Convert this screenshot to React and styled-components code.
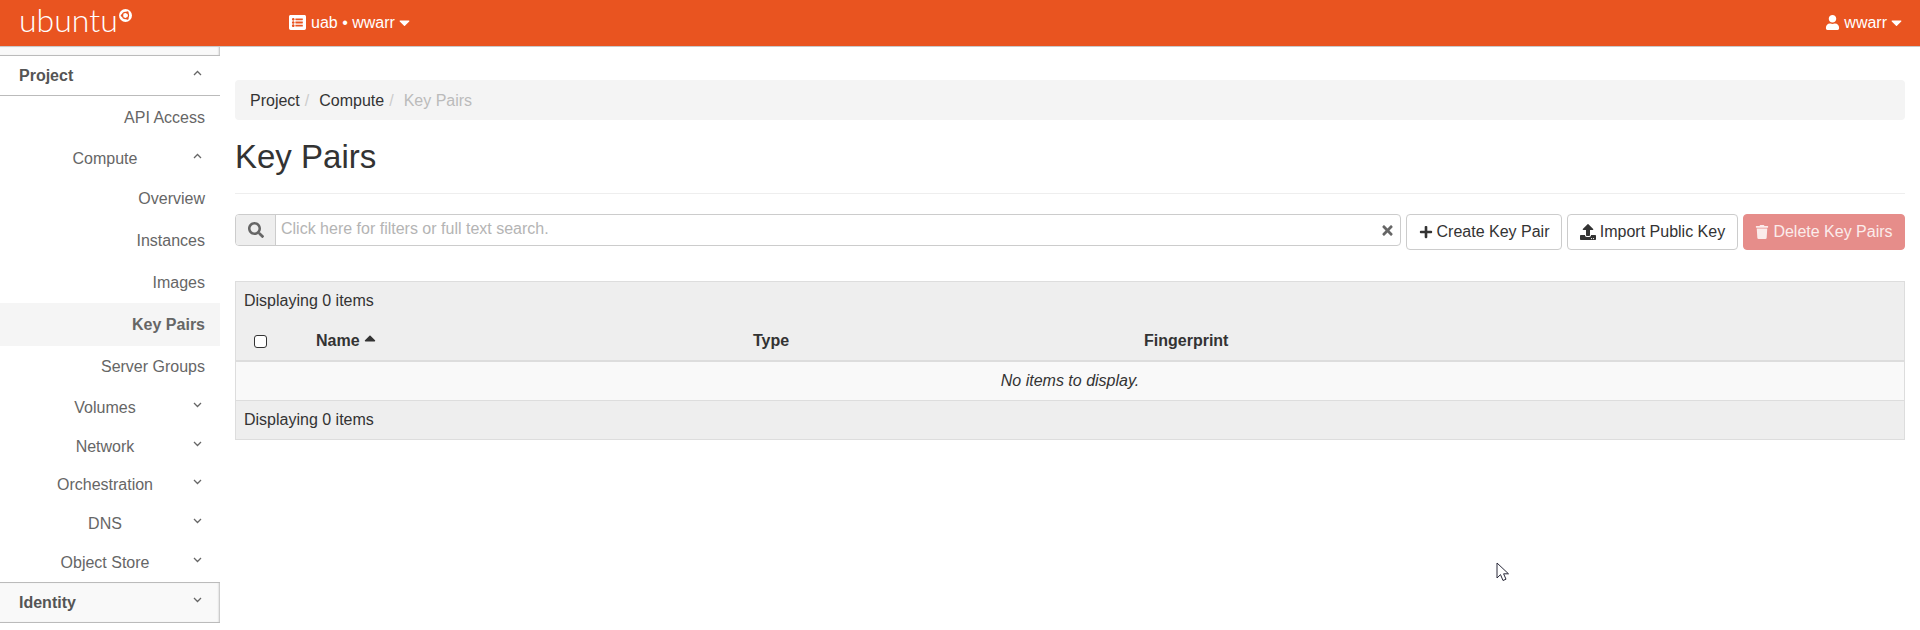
import React from 'react';
import styled, { createGlobalStyle } from 'styled-components';
import {
  FaCaretDown, FaCaretUp, FaListAlt, FaPlus, FaSearch, FaTimes, FaTrash, FaUpload, FaUser,
} from 'react-icons/fa';

const GlobalStyle = createGlobalStyle`
  html, body { margin: 0; padding: 0; height: 630px; overflow: hidden; background: #fff; }
  body { font-family: "Liberation Sans", Arial, sans-serif; font-size: 16px; color: #333; }
  * { box-sizing: border-box; }
`;

// --------------------- Header ----------------------------------------

const TopBar = styled.header`
  height: 47px;
  background: #e95420;
  border-bottom: 1px solid #c9c9c9;
  color: #fff;
  display: flex;
  align-items: center;
`;

const Brand = styled.div`
  width: 289px;
  padding-left: 19px;
  display: flex;
  align-items: flex-start;
  height: 46px;
`;

const BrandName = styled.span`
  font-family: Lato, sans-serif;
  font-weight: 300;
  font-size: 32px;
  line-height: 40px;
`;

const BrandMark = styled.svg`
  width: 13px;
  height: 13px;
  margin: 9px 0 0 1px;
`;

const NavMenu = styled.div`
  display: flex;
  align-items: center;
  gap: 4px;
  font-size: 16px;
  margin-top: -1px;
  margin-left: ${(p) => (p.$end ? 'auto' : '0')};
  margin-right: ${(p) => (p.$end ? '15px' : '0')};
`;

const ProjectIcon = styled(FaListAlt)`
  font-size: 17px;
  margin-right: 1px;
`;

const NavCaret = styled(FaCaretDown)`
  font-size: 17px;
  margin-left: -3px;
`;

const Body = styled.div`
  display: flex;
`;

// --------------------- Sidebar ----------------------------------------

const Sidebar = styled.nav`
  width: 220px;
  flex: none;
  font-size: 16px;
  color: #666;
`;

const SideStub = styled.div`
  height: 9px;
  background: #f9f9f9;
  border-bottom: 1px solid #bbb;
  box-shadow: inset -2px 0 2px -1px #bbb;
`;

const PanelHead = styled.div`
  height: ${(p) => p.$h}px;
  display: flex;
  align-items: center;
  padding-left: 19px;
  font-weight: 700;
  color: #555;
  border-bottom: 1px solid #bbb;
  ${(p) => p.$closed && `
    background: #f9f9f9;
    border-top: 1px solid #bbb;
    box-shadow: inset -2px 0 2px -1px #bbb;
  `}
`;

const PanelLabel = styled.span`
  width: 172px;
`;

const GroupRow = styled.div`
  height: ${(p) => p.$h}px;
  display: flex;
  align-items: center;
  padding-left: 19px;
`;

const GroupLabel = styled.span`
  width: 172px;
  text-align: center;
`;

const LinkRow = styled.div`
  height: ${(p) => p.$h}px;
  display: flex;
  align-items: center;
  justify-content: flex-end;
  padding-right: 15px;
  ${(p) => p.$active && `
    background: #f5f5f5;
    font-weight: 700;
  `}
`;

const Chevron = styled.svg`
  width: 9px;
  height: 6px;
  margin: -6px 0 0 2px;
  fill: none;
  stroke: #666;
  stroke-width: 1.3;
`;

// --------------------- Content ----------------------------------------

const Main = styled.main`
  flex: 1;
  padding: 33px 15px 0;
`;

const Breadcrumb = styled.div`
  height: 40px;
  background: #f4f4f4;
  border-radius: 4px;
  padding: 2px 15px 0;
  display: flex;
  align-items: center;
`;

const Crumb = styled.span`
  color: ${(p) => (p.$active ? '#bbb' : '#333')};
`;

const CrumbSep = styled.span`
  color: #ccc;
  margin: 0 10px 0 5px;
`;

const Title = styled.h1`
  font-size: 33px;
  font-weight: 400;
  line-height: 36px;
  color: #333;
  margin: 19px 0 0;
  padding-bottom: 18px;
  border-bottom: 1px solid #eee;
`;

const Toolbar = styled.div`
  display: flex;
  align-items: flex-start;
  gap: 5px;
  margin-top: 20px;
  height: 37px;
`;

const SearchGroup = styled.div`
  flex: 1;
  height: 32px;
  display: flex;
  border: 1px solid #ccc;
  border-radius: 4px;
  overflow: hidden;
`;

const SearchAddon = styled.div`
  width: 40px;
  background: #eee;
  border-right: 1px solid #ccc;
  color: #666;
  display: flex;
  align-items: center;
  justify-content: center;
  font-size: 16px;
`;

const SearchText = styled.div`
  flex: 1;
  color: #b4b4b4;
  padding-left: 5px;
  line-height: 28px;
`;

const SearchClear = styled.div`
  width: 20px;
  display: flex;
  align-items: center;
  color: #666;
  font-size: 15px;
`;

const Button = styled.div`
  height: 36px;
  width: ${(p) => p.$w}px;
  border: 1px solid ${(p) => (p.$danger ? '#e68d8a' : '#ccc')};
  border-radius: 4px;
  background: ${(p) => (p.$danger ? '#e68d8a' : '#fff')};
  color: ${(p) => (p.$danger ? '#fbeceb' : '#333')};
  display: flex;
  align-items: center;
  justify-content: center;
  gap: 4px;
  font-size: 16px;
`;

const TableBox = styled.div`
  margin-top: 30px;
  border: 1px solid #ddd;
  background: #eee;
`;

const Summary = styled.div`
  height: ${(p) => p.$h}px;
  line-height: ${(p) => p.$h}px;
  padding-left: 8px;
`;

const HeadRow = styled.div`
  height: 42px;
  padding-top: 2px;
  display: grid;
  grid-template-columns: 80px 437px 391px 1fr;
  align-items: center;
  border-bottom: 2px solid #ddd;
  font-weight: 700;
`;

const CheckCell = styled.div`
  padding-left: 18px;
  display: flex;
  align-items: center;
`;

const CheckBox = styled.span`
  width: 13px;
  height: 13px;
  background: #fff;
  border: 1px solid #333;
  border-radius: 3px;
`;

const SortCell = styled.div`
  display: flex;
  align-items: center;
  gap: 1px;
`;

const SortMark = styled(FaCaretUp)`
  font-size: 18px;
  margin-top: -6px;
`;

const EmptyRow = styled.div`
  height: 39px;
  line-height: 38px;
  background: #f9f9f9;
  border-bottom: 1px solid #ddd;
  text-align: center;
  font-style: italic;
`;

const Pointer = styled.svg`
  position: absolute;
  left: 1496px;
  top: 562px;
  width: 14px;
  height: 21px;
`;

// ------------------------------------ DATA -------------------------------

const rows = [
  { type: 'link', label: 'API Access', h: 43 },
  { type: 'group', label: 'Compute', h: 40, open: true },
  { type: 'link', label: 'Overview', h: 40 },
  { type: 'link', label: 'Instances', h: 43 },
  { type: 'link', label: 'Images', h: 41 },
  { type: 'link', label: 'Key Pairs', h: 43, active: true },
  { type: 'link', label: 'Server Groups', h: 41 },
  { type: 'group', label: 'Volumes', h: 41 },
  { type: 'group', label: 'Network', h: 38 },
  { type: 'group', label: 'Orchestration', h: 38 },
  { type: 'group', label: 'DNS', h: 39 },
  { type: 'group', label: 'Object Store', h: 39 },
];

const Caret = ({ open }) => (
  <Chevron viewBox="0 0 9 6">
    <polyline points={open ? '1,5 4.5,1.5 8,5' : '1,1 4.5,4.5 8,1'} />
  </Chevron>
);

// ------------------------------------ COMPONENT -------------------------------

const App = () => (
  <>
    <GlobalStyle />
    <TopBar>
      <Brand>
        <BrandName>ubuntu</BrandName>
        <BrandMark viewBox="0 0 14 14">
          <circle cx="7" cy="7" r="7" fill="#fff" />
          <circle cx="7" cy="7" r="3.3" fill="none" stroke="#e95420" strokeWidth="1.3" />
          <circle cx="3.2" cy="7" r="1.3" fill="#e95420" />
          <circle cx="9" cy="3.7" r="1.3" fill="#e95420" />
          <circle cx="9" cy="10.3" r="1.3" fill="#e95420" />
        </BrandMark>
      </Brand>
      <NavMenu>
        <ProjectIcon />
        <span>uab • wwarr</span>
        <NavCaret />
      </NavMenu>
      <NavMenu $end>
        <FaUser size={15} />
        <span>wwarr</span>
        <NavCaret />
      </NavMenu>
    </TopBar>
    <Body>
      <Sidebar>
        <SideStub />
        <PanelHead $h={40}>
          <PanelLabel>Project</PanelLabel>
          <Caret open />
        </PanelHead>
        {rows.map((row) => (row.type === 'link' ? (
          <LinkRow key={row.label} $h={row.h} $active={row.active}>{row.label}</LinkRow>
        ) : (
          <GroupRow key={row.label} $h={row.h}>
            <GroupLabel>{row.label}</GroupLabel>
            <Caret open={row.open} />
          </GroupRow>
        )))}
        <PanelHead $h={41} $closed>
          <PanelLabel>Identity</PanelLabel>
          <Caret />
        </PanelHead>
      </Sidebar>
      <Main>
        <Breadcrumb>
          <Crumb>Project</Crumb>
          <CrumbSep>/</CrumbSep>
          <Crumb>Compute</Crumb>
          <CrumbSep>/</CrumbSep>
          <Crumb $active>Key Pairs</Crumb>
        </Breadcrumb>
        <Title>Key Pairs</Title>
        <Toolbar>
          <SearchGroup>
            <SearchAddon><FaSearch /></SearchAddon>
            <SearchText>Click here for filters or full text search.</SearchText>
            <SearchClear><FaTimes /></SearchClear>
          </SearchGroup>
          <Button $w={156}>
            <FaPlus size={14} />
            Create Key Pair
          </Button>
          <Button $w={171}>
            <FaUpload size={16} />
            Import Public Key
          </Button>
          <Button $w={162} $danger>
            <FaTrash size={14} />
            Delete Key Pairs
          </Button>
        </Toolbar>
        <TableBox>
          <Summary $h={38}>Displaying 0 items</Summary>
          <HeadRow>
            <CheckCell><CheckBox /></CheckCell>
            <SortCell>
              Name
              <SortMark />
            </SortCell>
            <div>Type</div>
            <div>Fingerprint</div>
          </HeadRow>
          <EmptyRow>No items to display.</EmptyRow>
          <Summary $h={38}>Displaying 0 items</Summary>
        </TableBox>
      </Main>
    </Body>
    <Pointer viewBox="0 0 14 21">
      <path d="M1 1 L1 16 L4.5 12.6 L7 18.5 L10 17.2 L7.6 11.8 L12.5 11.8 Z" fill="#fff" stroke="#2a2a3a" strokeWidth="1" />
    </Pointer>
  </>
);

export default App;
